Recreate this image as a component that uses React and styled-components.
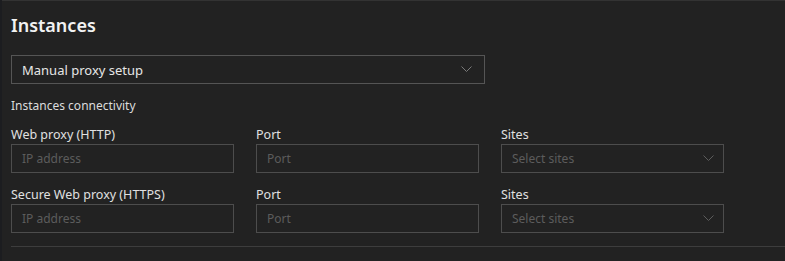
import React from "react";
import styled, { createGlobalStyle } from "styled-components";

const GlobalStyle = createGlobalStyle`
  html, body {
    margin: 0;
    padding: 0;
    background: #1c1d20;
  }
  body {
    font-family: "Noto Sans", "Open Sans", sans-serif;
  }
`;

const Panel = styled.section`
  margin-left: 2px;
  height: 261px;
  box-sizing: border-box;
  background: #222222;
  border-top: 1px solid #333333;
  padding: 0 0 0 9px;
  color: #e6e6e6;
`;

const Title = styled.h2`
  margin: 0;
  padding-top: 12px;
  font-size: 18px;
  line-height: 24px;
  font-weight: 600;
  color: #f2f2f2;
`;

const Select = styled.div`
  margin-top: 18px;
  height: 29px;
  box-sizing: border-box;
  border: 1px solid #555555;
  display: flex;
  align-items: center;
  justify-content: space-between;
  padding: 0 12px 0 10px;
  font-size: 13px;
  color: #e6e6e6;
  width: 474px;
`;

const Section = styled.div`
  margin-top: 14px;
  font-size: 12px;
  line-height: 16px;
  color: #dcdcdc;
`;

const Grid = styled.div`
  display: grid;
  grid-template-columns: repeat(3, 223px);
  column-gap: 22px;
  row-gap: 14px;
  margin-top: 13px;
`;

const Field = styled.div`
  display: flex;
  flex-direction: column;
  gap: 1px;
`;

const Label = styled.label`
  font-size: 12.5px;
  line-height: 16px;
  color: #e0e0e0;
`;

const Input = styled.div`
  height: 29px;
  box-sizing: border-box;
  border: 1px solid #4d4d4d;
  display: flex;
  align-items: center;
  justify-content: space-between;
  padding: 0 9px 0 10px;
  font-size: 12px;
  color: #5c5c5c;
`;

const Divider = styled.hr`
  margin: 13px 0 0;
  border: 0;
  border-top: 1px solid #3d3d3d;
`;

const Chevron = ({ color = "#7a7a7a" }) => (
  <svg width="11" height="7" viewBox="0 0 11 7" fill="none">
    <path d="M0.5 0.5 L5.5 5.5 L10.5 0.5" stroke={color} strokeWidth="1" />
  </svg>
);

const rows = [
  { label: "Web proxy (HTTP)" },
  { label: "Secure Web proxy (HTTPS)" },
];

export default function App() {
  return (
    <>
      <GlobalStyle />
      <Panel>
        <Title>Instances</Title>
        <Select>
          <span>Manual proxy setup</span>
          <Chevron />
        </Select>
        <Section>Instances connectivity</Section>
        <Grid>
          {rows.map((r) => (
            <React.Fragment key={r.label}>
              <Field>
                <Label>{r.label}</Label>
                <Input>IP address</Input>
              </Field>
              <Field>
                <Label>Port</Label>
                <Input>Port</Input>
              </Field>
              <Field>
                <Label>Sites</Label>
                <Input>
                  <span>Select sites</span>
                  <Chevron color="#5c5c5c" />
                </Input>
              </Field>
            </React.Fragment>
          ))}
        </Grid>
        <Divider />
      </Panel>
    </>
  );
}
